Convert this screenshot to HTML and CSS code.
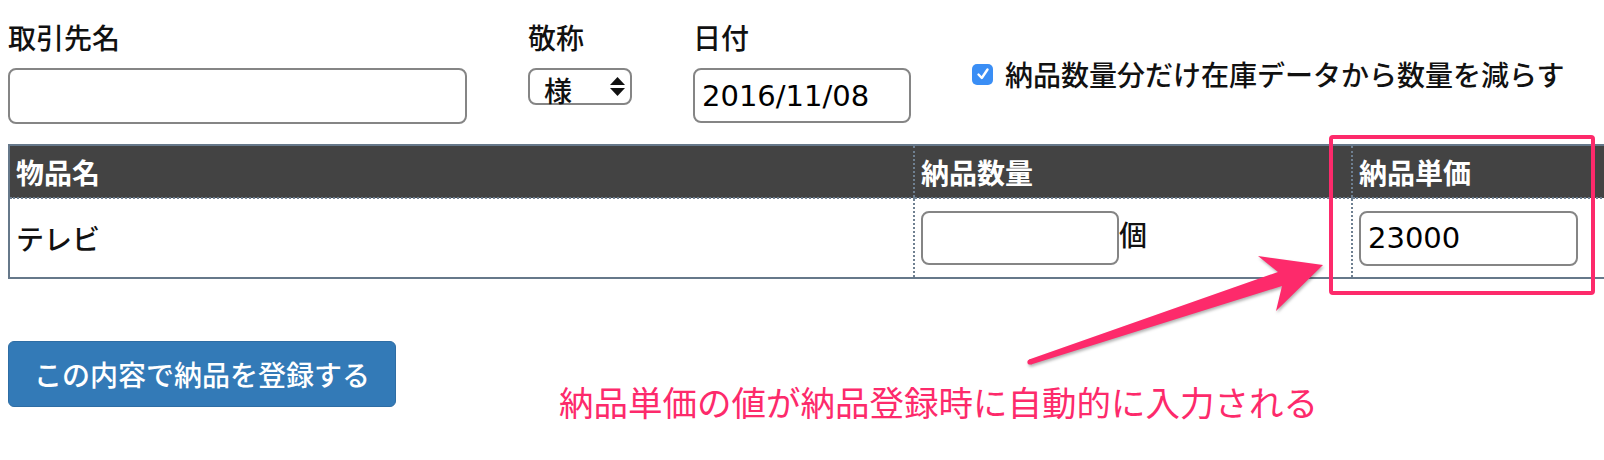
FILE: index.html
```html
<!DOCTYPE html>
<html lang="ja">
<head>
  <meta charset="UTF-8">
  <title>納品登録</title>
  <link rel="stylesheet" href="styles.css">
</head>
<body>
  <div class="page">
    <form class="delivery-form">
      <div class="form-row">
        <div class="field field-client">
          <label for="client">取引先名</label>
          <input type="text" id="client" class="text-input client-input">
        </div>
        <div class="field field-title">
          <label>敬称</label>
          <div class="select-box">
            <span>様</span>
            <svg width="17" height="20" viewBox="0 0 17 20"><path d="M8.5 0 L16 8 H1 Z M1 11 H16 L8.5 19 Z" fill="#111"/></svg>
          </div>
        </div>
        <div class="field field-date">
          <label for="date">日付</label>
          <input type="text" id="date" class="text-input date-input" value="2016/11/08">
        </div>
        <label class="stock-check">
          <span class="check-box"><svg width="14" height="14" viewBox="0 0 14 14"><path d="M2.5 7.5 L5.8 11 L11.5 2.5" fill="none" stroke="#fff" stroke-width="2.4" stroke-linecap="round" stroke-linejoin="round"/></svg></span>納品数量分だけ在庫データから数量を減らす
        </label>
      </div>

      <table class="items">
        <colgroup>
          <col class="col-name">
          <col class="col-qty">
          <col class="col-price">
        </colgroup>
        <thead>
          <tr>
            <th>物品名</th>
            <th>納品数量</th>
            <th>納品単価</th>
          </tr>
        </thead>
        <tbody>
          <tr>
            <td>テレビ</td>
            <td><input type="text" class="text-input qty-input">個</td>
            <td><input type="text" class="text-input price-input" value="23000"></td>
          </tr>
        </tbody>
      </table>

      <button type="submit" class="submit-btn">この内容で納品を登録する</button>
    </form>

    <!-- annotation layer -->
    <div class="callout-box"></div>
    <svg class="callout-arrow" width="1604" height="460" viewBox="0 0 1604 460">
      <g fill="#fd2a6b">
        <polygon points="1029,359.6 1278,272 1258,256 1323,265 1276,311 1282,286 1031,364.4"/>
        <circle cx="1030" cy="362" r="2.6"/>
      </g>
    </svg>
    <p class="callout-text">納品単価の値が納品登録時に自動的に入力される</p>
  </div>
</body>
</html>
```

FILE: styles.css
```css
html, body {
  margin: 0;
  padding: 0;
  overflow: hidden;
}
body {
  font-family: "Noto Sans CJK JP", sans-serif;
  font-size: 28px;
  font-weight: 500;
  color: #111;
  background: #fff;
}
.page {
  position: relative;
  width: 1604px;
  height: 460px;
  padding: 0 8px;
  box-sizing: border-box;
}
.form-row {
  display: flex;
  gap: 61px;
  padding-top: 20px;
}
.field {
  display: flex;
  flex-direction: column;
  align-items: flex-start;
}
.field label {
  line-height: 34px;
  margin-bottom: 14px;
}
.text-input {
  box-sizing: border-box;
  height: 56px;
  border: 2px solid #858585;
  border-radius: 8px;
  padding: 0 7px;
  font-family: "DejaVu Sans", sans-serif;
  font-size: 29px;
  font-weight: normal;
  color: #000;
  background: #fff;
  vertical-align: middle;
}
.client-input {
  width: 459px;
}
.select-box {
  box-sizing: border-box;
  width: 104px;
  height: 37px;
  border: 2px solid #858585;
  border-radius: 8px;
  display: flex;
  align-items: center;
  justify-content: space-between;
  padding: 0 4px 0 14px;
  line-height: 34px;
}
.select-box span {
  margin-top: 6px;
}
.date-input {
  width: 218px;
  height: 55px;
}
.stock-check {
  display: flex;
  align-items: center;
  margin-top: 37px;
  line-height: 34px;
  align-self: flex-start;
}
.check-box {
  width: 21px;
  height: 21px;
  border-radius: 5px;
  background: #3a8ef5;
  display: flex;
  align-items: center;
  justify-content: center;
  margin-right: 12px;
}
.items {
  border-collapse: collapse;
  table-layout: fixed;
  width: 1620px;
  margin-top: 20px;
  border-top: 2px solid #66788a;
  border-bottom: 2px solid #66788a;
}
.col-name { width: 905px; }
.col-qty { width: 438px; }
.col-price { width: 277px; }
.items th,
.items td {
  text-align: left;
  padding: 0 6px;
  border-left: 2px dotted #6f8091;
}
.items th:first-child,
.items td:first-child {
  border-left: 2px solid #66788a;
}
.items th {
  background: #434343;
  color: #fff;
  font-weight: bold;
  height: 51px;
  line-height: 34px;
  border-bottom: 2px dotted #6f8091;
}
.items td {
  height: 78px;
  line-height: 34px;
}
.qty-input {
  width: 198px;
  height: 54px;
}
.price-input {
  width: 219px;
  height: 55px;
}
.submit-btn {
  display: block;
  margin-top: 62px;
  width: 388px;
  height: 66px;
  background: #337ab7;
  border: 1px solid #2e6da4;
  border-radius: 6px;
  color: #fff;
  font-family: "Noto Sans CJK JP", sans-serif;
  font-size: 28px;
  font-weight: 500;
  padding: 0;
}
.callout-box {
  position: absolute;
  left: 1329px;
  top: 135px;
  width: 266px;
  height: 160px;
  box-sizing: border-box;
  border: 4px solid #fd2a6b;
  border-radius: 4px;
}
.callout-arrow {
  position: absolute;
  left: 0;
  top: 0;
  pointer-events: none;
  filter: drop-shadow(1px 2px 1.5px rgba(0, 0, 0, 0.3));
}
.callout-text {
  position: absolute;
  left: 559px;
  top: 384px;
  margin: 0;
  font-size: 34.5px;
  font-weight: normal;
  line-height: 35px;
  color: #fd2a6b;
  white-space: nowrap;
}
```
